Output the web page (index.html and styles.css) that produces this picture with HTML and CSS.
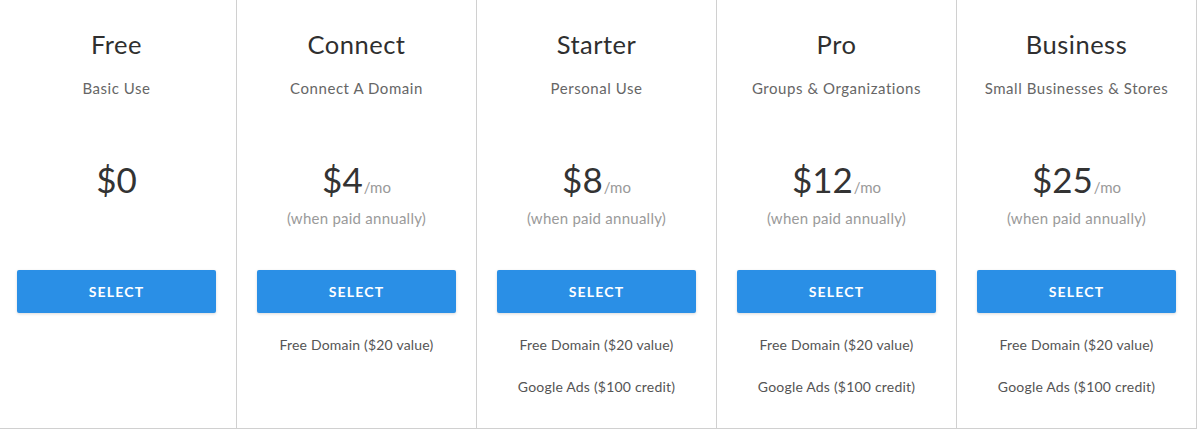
FILE: index.html
```html
<!DOCTYPE html>
<html>
<head>
<meta charset="utf-8">
<link rel="stylesheet" href="styles.css">
</head>
<body>
<div class="plans">
  <div class="plan">
    <div class="name">Free</div>
    <div class="sub">Basic Use</div>
    <div class="price-area">
      <div class="price">$0</div>
    </div>
    <button class="btn">SELECT</button>
    <ul class="features"></ul>
  </div>
  <div class="plan">
    <div class="name">Connect</div>
    <div class="sub">Connect A Domain</div>
    <div class="price-area">
      <div class="price">$4<span class="per">/mo</span></div>
      <div class="annual">(when paid annually)</div>
    </div>
    <button class="btn">SELECT</button>
    <ul class="features">
      <li>Free Domain ($20 value)</li>
    </ul>
  </div>
  <div class="plan">
    <div class="name">Starter</div>
    <div class="sub">Personal Use</div>
    <div class="price-area">
      <div class="price">$8<span class="per">/mo</span></div>
      <div class="annual">(when paid annually)</div>
    </div>
    <button class="btn">SELECT</button>
    <ul class="features">
      <li>Free Domain ($20 value)</li>
      <li>Google Ads ($100 credit)</li>
    </ul>
  </div>
  <div class="plan">
    <div class="name">Pro</div>
    <div class="sub">Groups &amp; Organizations</div>
    <div class="price-area">
      <div class="price">$12<span class="per">/mo</span></div>
      <div class="annual">(when paid annually)</div>
    </div>
    <button class="btn">SELECT</button>
    <ul class="features">
      <li>Free Domain ($20 value)</li>
      <li>Google Ads ($100 credit)</li>
    </ul>
  </div>
  <div class="plan">
    <div class="name">Business</div>
    <div class="sub">Small Businesses &amp; Stores</div>
    <div class="price-area">
      <div class="price">$25<span class="per">/mo</span></div>
      <div class="annual">(when paid annually)</div>
    </div>
    <button class="btn">SELECT</button>
    <ul class="features">
      <li>Free Domain ($20 value)</li>
      <li>Google Ads ($100 credit)</li>
    </ul>
  </div>
</div>
</body>
</html>
```
FILE: styles.css
```css
html, body {
  margin: 0;
  padding: 0;
  background: #fff;
}
body {
  font-family: "Lato", "Liberation Sans", sans-serif;
  overflow: hidden;
}
.plans {
  display: flex;
  margin-left: -3px;
  width: 1200px;
  height: 429px;
  border-bottom: 1px solid #d0d0d0;
  box-sizing: border-box;
}
.plan {
  width: 240px;
  flex: none;
  box-sizing: border-box;
  border-right: 1px solid #d0d0d0;
  display: flex;
  flex-direction: column;
  align-items: stretch;
  text-align: center;
  padding: 29px 20px 0 20px;
}
.name {
  font-size: 25.5px;
  line-height: 30px;
  color: #2f2f2f;
  letter-spacing: 0.5px;
}
.sub {
  margin-top: 19px;
  font-size: 15px;
  line-height: 20px;
  color: #666;
  letter-spacing: 0.55px;
}
.price-area {
  height: 172px;
  box-sizing: border-box;
  padding-top: 61px;
}
.price {
  font-size: 35px;
  line-height: 40px;
  height: 40px;
  color: #333;
}
.per {
  font-size: 15px;
  line-height: 1;
  color: #999;
  margin-left: 1px;
}
.annual {
  margin-top: 9px;
  font-size: 15px;
  line-height: 20px;
  color: #9a9a9a;
  letter-spacing: 0.25px;
}
.btn {
  height: 43px;
  border: none;
  border-radius: 2px;
  background: #2a8fe6;
  color: #fff;
  font-family: "Lato", "Liberation Sans", sans-serif;
  font-weight: bold;
  font-size: 14px;
  letter-spacing: 1.2px;
  box-shadow: 0 1px 3px rgba(0,0,0,0.15);
  padding: 0;
}
.features {
  list-style: none;
  margin: 22px 0 0 0;
  padding: 0;
  display: flex;
  flex-direction: column;
  gap: 22px;
}
.features li {
  font-size: 14px;
  line-height: 20px;
  color: #555;
  letter-spacing: 0.2px;
}
```
